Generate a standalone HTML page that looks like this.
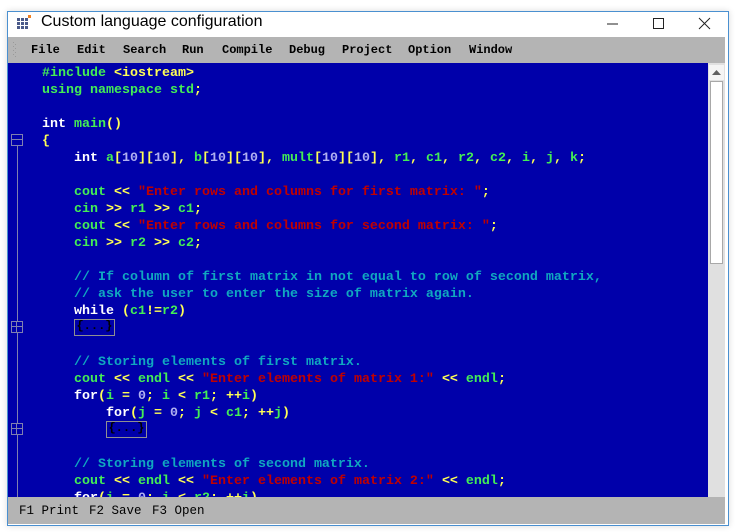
<!DOCTYPE html>
<html><head><meta charset="utf-8"><style>
*{margin:0;padding:0;box-sizing:border-box}
body{width:735px;height:532px;background:#fff;position:relative;overflow:hidden;font-family:"Liberation Sans",sans-serif}
.win{position:absolute;left:7px;top:11px;width:722px;height:515px;border:1px solid #4a90d0;background:#fff;box-shadow:0 0 6px rgba(0,0,0,.15)}
.title{position:absolute;left:41px;top:13px;font-size:16px;color:#000}
.menu{position:absolute;left:8px;top:37px;width:717px;height:26px;background:#b4b4b4}
.mi{position:absolute;top:43px;font:bold 12px "Liberation Mono",monospace;color:#000}
.ed{position:absolute;left:8px;top:63px;width:700px;height:434px;background:#0000aa;overflow:hidden}
.sb{position:absolute;left:708px;top:63px;width:17px;height:434px;background:#e0e0e0}
.st{position:absolute;left:8px;top:497px;width:717px;height:27px;background:#b4b4b4}
.l{position:absolute;left:34px;white-space:pre;font:bold 13.33px/17px "Liberation Mono",monospace;color:#44ee55}
.k{color:#fff}.p{color:#ffff55}.n{color:#b0b0f0}.s{color:#c00000}.c{color:#10a8c0}
.fb{position:absolute;width:41px;height:17px;border:1px solid #909090;color:#000;font:bold 12px/13px "Liberation Mono",monospace;text-align:center}
.fm{position:absolute;left:3px;width:12px;height:12px;border:1px solid #8080b0}
.fm:after{content:"";position:absolute;left:0;right:0;top:4px;height:1px;background:#8080b0}
.fm.p2:before{content:"";position:absolute;top:0;bottom:0;left:4px;width:1px;background:#8080b0}
.sx{position:absolute;top:504px;font:12.5px "Liberation Mono",monospace;color:#000}
</style></head><body>
<div class="win"></div>
<svg style="position:absolute;left:17px;top:15px" width="15" height="15"><g fill="#4a5a8a"><rect x="0" y="3" width="3" height="3"/><rect x="4" y="3" width="3" height="3"/><rect x="8" y="3" width="3" height="3"/><rect x="0" y="7" width="3" height="3"/><rect x="4" y="7" width="3" height="3"/><rect x="8" y="7" width="3" height="3"/><rect x="0" y="11" width="3" height="3"/><rect x="4" y="11" width="3" height="3"/><rect x="8" y="11" width="3" height="3"/></g><rect x="11" y="0" width="3" height="3" fill="#f08020"/></svg>
<div class="title">Custom language configuration</div>
<svg style="position:absolute;left:600px;top:15px" width="120" height="18"><line x1="7" y1="9" x2="18" y2="9" stroke="#222"/><rect x="53.5" y="3.5" width="10" height="10" fill="none" stroke="#222"/><path d="M99 3L110 14M110 3L99 14" stroke="#222"/></svg>
<div class="menu"></div>
<svg style="position:absolute;left:13px;top:42px" width="4" height="16"><g fill="#999"><rect x="0" y="0" width="1" height="1"/><rect x="2" y="2" width="1" height="1"/><rect x="0" y="4" width="1" height="1"/><rect x="2" y="6" width="1" height="1"/><rect x="0" y="8" width="1" height="1"/><rect x="2" y="10" width="1" height="1"/><rect x="0" y="12" width="1" height="1"/><rect x="2" y="14" width="1" height="1"/></g></svg>
<div class="mi" style="left:31px">File</div><div class="mi" style="left:77px">Edit</div><div class="mi" style="left:123px">Search</div><div class="mi" style="left:182px">Run</div><div class="mi" style="left:222px">Compile</div><div class="mi" style="left:289px">Debug</div><div class="mi" style="left:342px">Project</div><div class="mi" style="left:408px">Option</div><div class="mi" style="left:469px">Window</div>
<div class="ed">
<div style="position:absolute;left:9px;top:83px;width:1px;height:351px;background:#8080b0"></div>
<div class="fm" style="top:71px"></div>
<div class="fm p2" style="top:258px;background:#0000aa"></div>
<div class="fm p2" style="top:360px;background:#0000aa"></div>
<div class="l" style="top:2px">#include <span class="p">&lt;iostream&gt;</span></div>
<div class="l" style="top:19px">using namespace std<span class="p">;</span></div>
<div class="l" style="top:53px"><span class="k">int</span> main<span class="p">()</span></div>
<div class="l" style="top:70px"><span class="p">{</span></div>
<div class="l" style="top:87px">    <span class="k">int</span> a<span class="p">[</span><span class="n">10</span><span class="p">][</span><span class="n">10</span><span class="p">],</span> b<span class="p">[</span><span class="n">10</span><span class="p">][</span><span class="n">10</span><span class="p">],</span> mult<span class="p">[</span><span class="n">10</span><span class="p">][</span><span class="n">10</span><span class="p">],</span> r1<span class="p">,</span> c1<span class="p">,</span> r2<span class="p">,</span> c2<span class="p">,</span> i<span class="p">,</span> j<span class="p">,</span> k<span class="p">;</span></div>
<div class="l" style="top:121px">    cout <span class="p">&lt;&lt;</span> <span class="s">"Enter rows and columns for first matrix: "</span><span class="p">;</span></div>
<div class="l" style="top:138px">    cin <span class="p">&gt;&gt;</span> r1 <span class="p">&gt;&gt;</span> c1<span class="p">;</span></div>
<div class="l" style="top:155px">    cout <span class="p">&lt;&lt;</span> <span class="s">"Enter rows and columns for second matrix: "</span><span class="p">;</span></div>
<div class="l" style="top:172px">    cin <span class="p">&gt;&gt;</span> r2 <span class="p">&gt;&gt;</span> c2<span class="p">;</span></div>
<div class="l c" style="top:206px">    // If column of first matrix in not equal to row of second matrix,</div>
<div class="l c" style="top:223px">    // ask the user to enter the size of matrix again.</div>
<div class="l" style="top:240px">    <span class="k">while</span> <span class="p">(</span>c1<span class="p">!=</span>r2<span class="p">)</span></div>
<div class="fb" style="left:66px;top:256px">{...}</div>
<div class="l c" style="top:291px">    // Storing elements of first matrix.</div>
<div class="l" style="top:308px">    cout <span class="p">&lt;&lt;</span> endl <span class="p">&lt;&lt;</span> <span class="s">"Enter elements of matrix 1:"</span> <span class="p">&lt;&lt;</span> endl<span class="p">;</span></div>
<div class="l" style="top:325px">    <span class="k">for</span><span class="p">(</span>i <span class="p">=</span> <span class="n">0</span><span class="p">;</span> i <span class="p">&lt;</span> r1<span class="p">;</span> <span class="p">++</span>i<span class="p">)</span></div>
<div class="l" style="top:342px">        <span class="k">for</span><span class="p">(</span>j <span class="p">=</span> <span class="n">0</span><span class="p">;</span> j <span class="p">&lt;</span> c1<span class="p">;</span> <span class="p">++</span>j<span class="p">)</span></div>
<div class="fb" style="left:98px;top:358px">{...}</div>
<div class="l c" style="top:393px">    // Storing elements of second matrix.</div>
<div class="l" style="top:410px">    cout <span class="p">&lt;&lt;</span> endl <span class="p">&lt;&lt;</span> <span class="s">"Enter elements of matrix 2:"</span> <span class="p">&lt;&lt;</span> endl<span class="p">;</span></div>
<div class="l" style="top:427px">    <span class="k">for</span><span class="p">(</span>i <span class="p">=</span> <span class="n">0</span><span class="p">;</span> i <span class="p">&lt;</span> r2<span class="p">;</span> <span class="p">++</span>i<span class="p">)</span></div>
</div>
<div class="sb">
<div style="position:absolute;left:1px;top:2px;width:15px;height:15px;background:#f4f4f4"><svg width="15" height="15"><path d="M3 10L7.5 5L12 10Z" fill="#606060"/></svg></div>
<div style="position:absolute;left:2px;top:18px;width:13px;height:183px;background:#fff;border:1px solid #a8a8a8"></div>
</div>
<div class="st"></div>
<div class="sx" style="left:19px">F1 Print</div><div class="sx" style="left:89px">F2 Save</div><div class="sx" style="left:152px">F3 Open</div>
</body></html>
